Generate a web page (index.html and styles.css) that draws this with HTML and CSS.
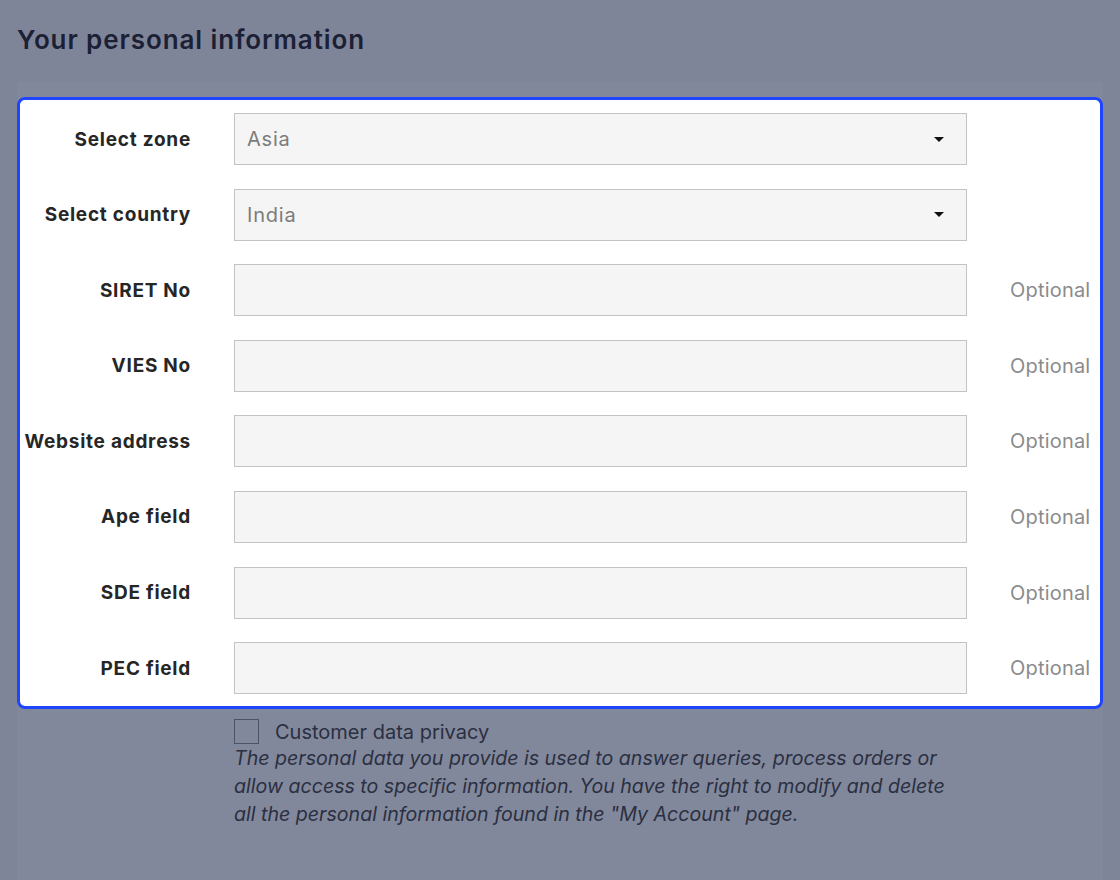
FILE: index.html
```html
<!DOCTYPE html>
<html lang="en">
<head>
  <meta charset="UTF-8">
  <meta name="viewport" content="width=device-width, initial-scale=1.0">
  <title>Your personal information</title>

  <link rel="stylesheet" href="styles.css">
</head>
<body>
  <h1 class="page-title">Your personal information</h1>

  <!-- Personal info section (dimmed, panel highlighted) -->
  <section class="info-section">
    <form class="info-form">
      <div class="form-panel">
        <div class="form-row">
          <label class="form-label" for="zone">Select zone</label>
          <div class="select-box" id="zone">
            <span class="select-value">Asia</span>
            <span class="caret"></span>
          </div>
          <span class="form-hint"></span>
        </div>

        <div class="form-row">
          <label class="form-label" for="country">Select country</label>
          <div class="select-box" id="country">
            <span class="select-value">India</span>
            <span class="caret"></span>
          </div>
          <span class="form-hint"></span>
        </div>

        <div class="form-row">
          <label class="form-label" for="siret">SIRET No</label>
          <input class="text-input" type="text" id="siret">
          <span class="form-hint">Optional</span>
        </div>

        <div class="form-row">
          <label class="form-label" for="vies">VIES No</label>
          <input class="text-input" type="text" id="vies">
          <span class="form-hint">Optional</span>
        </div>

        <div class="form-row">
          <label class="form-label" for="website">Website address</label>
          <input class="text-input" type="text" id="website">
          <span class="form-hint">Optional</span>
        </div>

        <div class="form-row">
          <label class="form-label" for="ape">Ape field</label>
          <input class="text-input" type="text" id="ape">
          <span class="form-hint">Optional</span>
        </div>

        <div class="form-row">
          <label class="form-label" for="sde">SDE field</label>
          <input class="text-input" type="text" id="sde">
          <span class="form-hint">Optional</span>
        </div>

        <div class="form-row">
          <label class="form-label" for="pec">PEC field</label>
          <input class="text-input" type="text" id="pec">
          <span class="form-hint">Optional</span>
        </div>
      </div>

      <!-- Privacy consent -->
      <div class="privacy">
        <label class="privacy-check">
          <span class="checkbox"></span>
          <span>Customer data privacy</span>
        </label>
        <p class="privacy-text">The personal data you provide is used to answer queries, process orders or allow access to specific information. You have the right to modify and delete all the personal information found in the "My Account" page.</p>
      </div>
    </form>
  </section>
</body>
</html>
```

FILE: styles.css
```css
/* Global Styles */
body {
  font-family: 'Inter', 'Noto Sans', sans-serif;
  margin: 0;
  padding: 0;
  background-color: #7f8598;
  min-height: 880px;
}

/* Title */
.page-title {
  margin: 0;
  padding: 24px 0 0 17px;
  height: 60px;
  box-sizing: border-box;
  font-size: 26px;
  font-weight: 600;
  color: #1b2034;
  letter-spacing: 0.9px;
}

.info-section {
  margin: 22px 0 0 17px;
  width: 1086px;
  height: 798px;
  padding-top: 15px;
  box-sizing: border-box;
  background-color: #82889b;
}

/* Highlighted panel */
.form-panel {
  background-color: #fff;
  border: 3px solid #1f45ff;
  border-radius: 8px;
  padding: 13px 0 12px;
  display: flex;
  flex-direction: column;
  gap: 23.6px;
}

.form-row {
  display: grid;
  grid-template-columns: 171px 733px 1fr;
  column-gap: 43px;
  align-items: center;
}

.form-label {
  text-align: right;
  font-size: 19px;
  font-weight: 700;
  letter-spacing: 0.75px;
  color: #262626;
}

.select-box,
.text-input {
  box-sizing: border-box;
  height: 52px;
  width: 733px;
  margin: 0;
  background-color: #f5f5f5;
  border: 1px solid #c3c3c3;
  border-radius: 0;
  font-family: inherit;
}

.select-box {
  display: flex;
  align-items: center;
  justify-content: space-between;
  padding: 0 22px 0 12px;
}

.select-value {
  font-size: 20px;
  letter-spacing: 0.8px;
  color: #7c7c7c;
}

.caret {
  width: 0;
  height: 0;
  border-left: 5px solid transparent;
  border-right: 5px solid transparent;
  border-top: 5px solid #111;
}

.form-hint {
  padding-left: 0;
  font-size: 20px;
  letter-spacing: 0.2px;
  color: #8b8b8b;
}

/* Privacy consent */
.privacy {
  padding: 10px 0 0 217px;
  color: #2a2f41;
}

.privacy-check {
  display: flex;
  align-items: center;
  gap: 16px;
  font-size: 20px;
  line-height: 24px;
}

.checkbox {
  width: 23px;
  height: 23px;
  border: 1px solid #4e5364;
}

.privacy-text {
  margin: 0;
  width: 725px;
  font-size: 19.6px;
  font-style: italic;
  line-height: 28px;
}
```
